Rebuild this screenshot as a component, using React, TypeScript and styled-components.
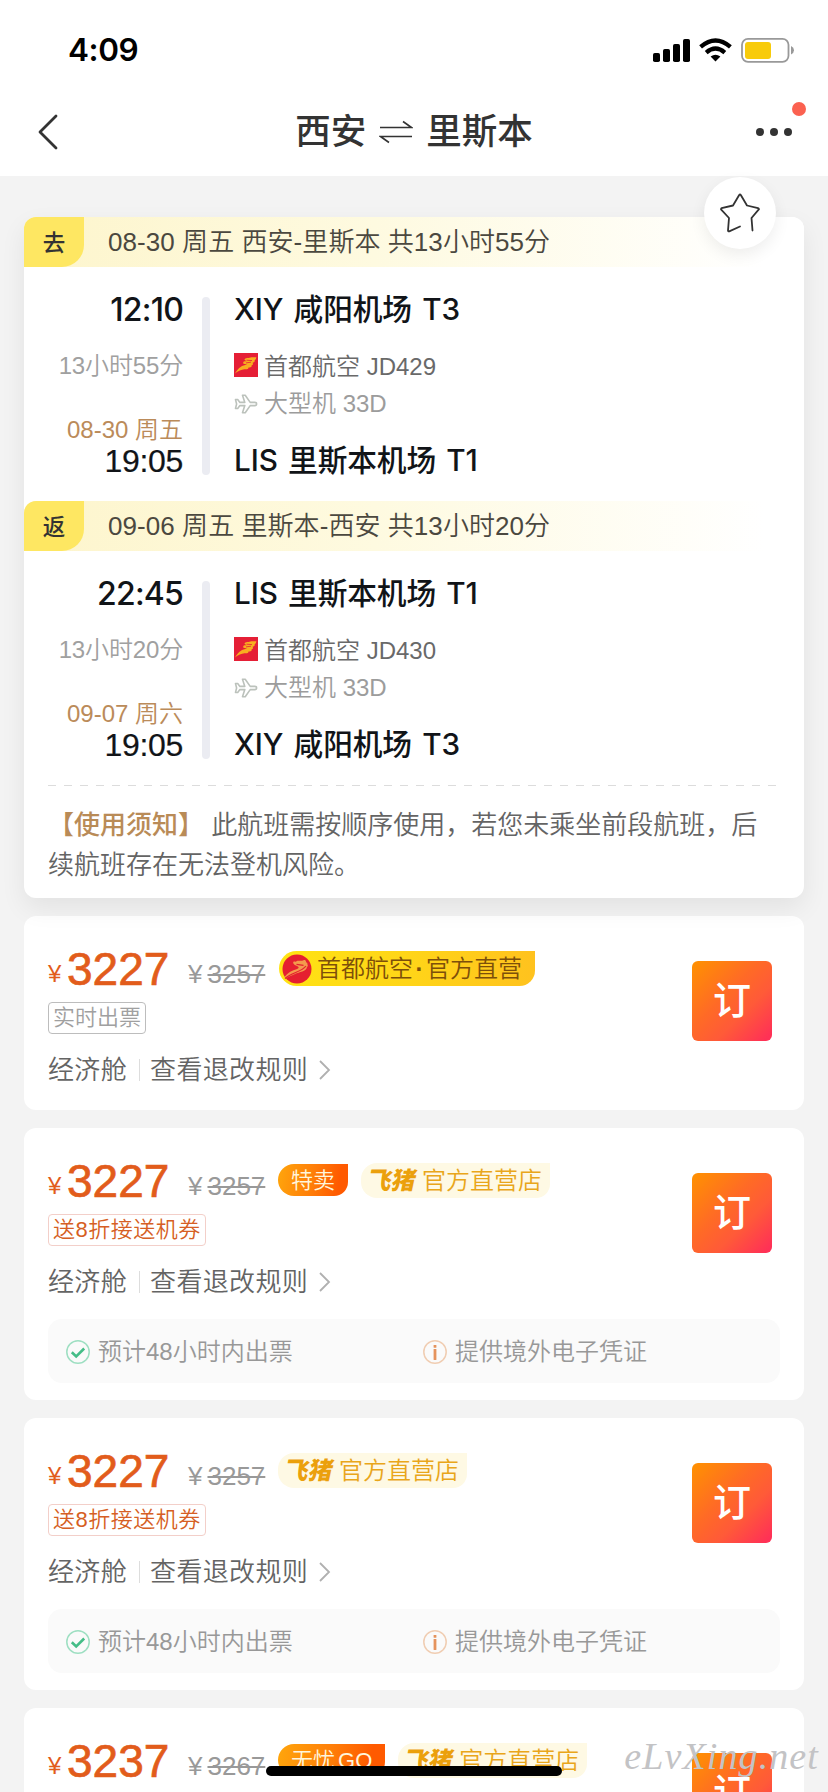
import React from "react";
import styled, { createGlobalStyle, css } from "styled-components";

const helv = `"Liberation Sans", "Noto Sans CJK SC", sans-serif`;
const round = `Inter, "Noto Sans CJK SC", sans-serif`;

const Global = createGlobalStyle`
  * { box-sizing: border-box; }
  body { margin: 0; background: #f3f3f3; font-family: ${helv}; font-weight: 350; }
`;

const Page = styled.main`
  position: relative;
  width: 828px;
  height: 1792px;
  overflow: hidden;
  background: #f3f3f3;
  white-space: nowrap;
`;

const StatusBar = styled.header`
  height: 88px;
  background: #fff;
  display: flex;
  align-items: center;
  justify-content: space-between;
  padding: 12px 34px 0 68px;
`;

const Clock = styled.div`
  font: 600 31.5px/40px ${round};
  color: #000;
  letter-spacing: -0.4px;
`;

const NavBar = styled.nav`
  height: 88px;
  background: #fff;
  display: grid;
  grid-template-columns: 120px 1fr 120px;
  align-items: center;
`;

const BackIcon = styled.svg`
  margin-left: 38px;
  display: block;
`;

const Title = styled.h1`
  margin: 0;
  display: flex;
  justify-content: center;
  align-items: center;
  gap: 13px;
  font: 500 35.5px/48px ${helv};
  color: #333;
`;

const More = styled.div`
  position: relative;
  display: flex;
  gap: 6px;
  margin-left: 48px;
`;

const Dot = styled.i`
  width: 8px;
  height: 8px;
  border-radius: 50%;
  background: #333;
`;

const Alert = styled.i`
  position: absolute;
  left: 36px;
  top: -26px;
  width: 14px;
  height: 14px;
  border-radius: 50%;
  background: #fb6150;
`;

const Content = styled.div`
  padding: 41px 24px 0;
  display: flex;
  flex-direction: column;
  gap: 18px;
`;

const TripCard = styled.section`
  position: relative;
  height: 681px;
  border-radius: 12px;
  background: #fff;
  box-shadow: 0 10px 26px rgba(0, 0, 0, 0.07);
`;

const Favorite = styled.button`
  position: absolute;
  right: 28px;
  top: -40px;
  width: 72px;
  height: 72px;
  border: 0;
  padding: 0;
  border-radius: 50%;
  background: #fff;
  box-shadow: 0 6px 16px rgba(0, 0, 0, 0.07);
  display: grid;
  place-items: center;
`;

const Band = styled.div`
  height: 50px;
  border-radius: 12px 12px 0 0;
  display: flex;
  align-items: center;
  background: linear-gradient(90deg, #fdf5cc 0%, #fefae0 45%, #fff 95%);
  font-size: 26px;
  line-height: 52px;
  letter-spacing: 0.06px;
  color: #4b483f;
`;

const Direction = styled.span`
  width: 60px;
  height: 50px;
  margin-right: 24px;
  border-radius: 12px 0 22px 0;
  background: #fee762;
  color: #333;
  font-size: 22.5px;
  font-weight: 500;
  text-align: center;
  line-height: 53px;
`;

const SegmentBody = styled.div`
  height: 234px;
  padding-top: 22px;
  display: grid;
  grid-template-columns: 159px 8px 1fr;
  column-gap: 19px;
`;

const Times = styled.div`
  display: flex;
  flex-direction: column;
  text-align: right;
  font-size: 24px;
  line-height: 30px;
`;

const Depart = styled.span`
  font: 500 32px/42px ${round};
  color: #111418;
  letter-spacing: -0.8px;
`;

const Arrive = styled.span`
  font: 400 32px/40px ${helv};
  color: #111418;
  margin-top: -4px;
  letter-spacing: -0.3px;
  -webkit-text-stroke: 0.2px #111418;
`;

const Duration = styled.span`
  margin: 20px 0 34px;
  letter-spacing: -0.15px;
  color: #a0a0a0;
`;

const ArriveDate = styled.span`
  color: #bb8b5a;
`;

const Rail = styled.i`
  height: 178px;
  margin-top: 8px;
  border-radius: 4px;
  background: #ebecf2;
`;

const Places = styled.div`
  padding-left: 5px;
`;

const Airport = styled.div`
  font: 500 29.7px/40px ${round};
  color: #111418;
  word-spacing: 2.5px;
  letter-spacing: -0.1px;
`;

const Details = styled.div`
  margin: 21px 0 18px;
`;

const Detail = styled.div<{ $muted?: boolean }>`
  display: flex;
  align-items: center;
  gap: 6px;
  height: 36px;
  font-size: 24px;
  line-height: 30px;
  padding-bottom: ${(p) => (p.$muted ? 1 : 3)}px;
  color: ${(p) => (p.$muted ? "#9c9c9c" : "#696969")};
  svg { display: block; ${(p) => !p.$muted && css`margin-top: -4px;`} }
`;

const Notice = styled.p`
  margin: 0 24px;
  padding-top: 20px;
  font-size: 26px;
  line-height: 40px;
  color: #646464;
  background: repeating-linear-gradient(90deg, #dcdcdc 0 8px, transparent 8px 16px) top / 100% 1px no-repeat;
  b { color: #b98b57; font-weight: 500; }
`;

const OfferCard = styled.article<{ $h: number }>`
  height: ${(p) => p.$h}px;
  flex: none;
  border-radius: 12px;
  background: #fff;
  padding: 31px 24px 0;
`;

const OfferTop = styled.div`
  display: flex;
  justify-content: space-between;
`;

const Book = styled.button`
  width: 80px;
  height: 80px;
  margin: 14px 8px 0 0;
  padding: 0;
  border: 0;
  border-radius: 6px;
  background: linear-gradient(135deg, #ff9200 0%, #ff6a26 42%, #ff5a38 65%, #ff3156 95%);
  color: #fff;
  font: 500 38px/78px ${helv};
`;

const PriceRow = styled.div`
  display: flex;
  height: 48px;
`;

const Yen = styled.span`
  width: 19px;
  padding-top: 12px;
  font: 400 24px/30px ${helv};
  color: #e25c1b;
`;

const Price = styled.strong`
  width: 121px;
  margin-top: -2px;
  font: 400 46px/48px ${helv};
  color: #e25c1b;
  -webkit-text-stroke: 0.7px #e25c1b;
`;

const OldPrice = styled.span`
  width: 90px;
  padding-top: 12px;
  color: #999;
  font: 400 26px/30px ${helv};
  s { margin-left: 5px; }
`;

const Badges = styled.div`
  display: flex;
  gap: 13px;
  padding-top: 4px;
`;

const Promo = styled.span`
  height: 32px;
  margin-top: 1px;
  padding: 0 13px;
  border-radius: 16px 0 14px 16px;
  background: linear-gradient(100deg, #ffa60c 0%, #ff7d08 50%, #ff5a00 85%);
  color: #fff6dc;
  font-size: 22px;
  line-height: 33px;
`;

const PromoText = styled.span`
  word-spacing: -3px;
`;

const Store = styled.span`
  height: 35px;
  padding: 0 8px 0 7px;
  display: flex;
  gap: 6px;
  border-radius: 16px 0 14px 16px;
  background: #fef9e4;
  color: #e9a61a;
  font-size: 24px;
  line-height: 36px;
`;

const Feizhu = styled.b`
  font: 900 24px/35px ${helv};
  color: #eba00c;
  transform: skewX(-12deg);
`;

const AirlineStore = styled.span`
  height: 35px;
  width: 256px;
  margin-left: 1px;
  padding-left: 3px;
  display: flex;
  align-items: center;
  gap: 5px;
  border-radius: 18px 0 16px 18px;
  background: linear-gradient(90deg, #ffe313 0%, #ffd518 50%, #ffc21e 100%);
  color: #7d4f0a;
  font-size: 24px;
  line-height: 36px;
  em { font-style: normal; font-weight: 700; display: inline-block; width: 13px; text-align: center; }
`;

const Tag = styled.span<{ $gray?: boolean }>`
  display: inline-block;
  height: 32px;
  margin-top: 7px;
  padding: 0 4px;
  border: 1px solid ${(p) => (p.$gray ? "#bdbdbd" : "#f3cfc9")};
  border-radius: 4px;
  color: ${(p) => (p.$gray ? "#a0a0a0" : "#d65f24")};
  font-size: 22px;
  line-height: 30px;
  letter-spacing: ${(p) => (p.$gray ? 0 : 0.5)}px;
`;

const Rules = styled.div`
  display: flex;
  align-items: center;
  height: 36px;
  margin-top: 18px;
  font-size: 26px;
  line-height: 36px;
  letter-spacing: 0.35px;
  color: #646464;
`;

const Divider = styled.i`
  width: 1px;
  height: 22px;
  margin: 0 10px 0 12px;
  background: #ddd;
`;

const Arrow = styled.svg`
  margin-left: 11px;
`;

const Assurances = styled.div`
  height: 64px;
  margin-top: 19px;
  padding: 1px 18px 0;
  border-radius: 14px;
  background: #fafafa;
  display: grid;
  grid-template-columns: 357px 1fr;
  align-items: center;
  font-size: 24px;
  line-height: 30px;
  color: #989898;
`;

const Assurance = styled.span`
  display: flex;
  align-items: center;
  gap: 8px;
`;

const HomeIndicator = styled.div`
  position: absolute;
  left: 266px;
  top: 1766px;
  width: 296px;
  height: 10px;
  border-radius: 5px;
  background: #000;
`;

const Watermark = styled.div`
  position: absolute;
  right: 9px;
  top: 1732px;
  font: italic 400 38px/48px "Liberation Serif", serif;
  letter-spacing: 1.1px;
  color: #c3c3c5;
`;

const AirlineLogo = () => (
  <svg width="24" height="24" viewBox="0 0 24 24">
    <rect width="24" height="24" fill="#e51f36" />
    <path d="M1 20.500C5 14 8 12.500 13 11.500L9.500 10.800C8.500 8.800 10 8 12.500 8.200L10.500 6.800C11 4.500 15 5.200 17.500 4.200C19.500 4.500 21 4 22.500 4.500C21.500 5.500 22.500 6.500 20.500 7.200C21.500 8.500 20 9.200 18.500 10C20 11 18.500 12 17.500 12.200C18.500 14 16 14.500 14.500 14.500C14.500 16.500 12 16.500 10.500 16.200C7.500 16.800 4 17.800 1 20.500Z" fill="#f8ae20" />
    <path d="M12.500 7.200l5.500 .4M12 9.900l5-.7" stroke="#e51f36" strokeWidth=".8" fill="none" />
  </svg>
);

const RoundLogo = () => (
  <svg width="30" height="30" viewBox="0 0 30 30">
    <circle cx="15" cy="15" r="14.5" fill="#e51f30" />
    <path d="M3 22.500C8 16.500 12 16.500 16 14.500C18 13 15 12 13 11C10 9.500 11 6.500 14 8C15 5.500 18 8 22 6C25 6 23 8.500 25.500 9C24.500 10 27 11.500 25 13C24.500 17.500 17 18 13 20C9 22 6 22.500 3 25Z" fill="#f39a4c" />
    <path d="M3 24.500C10 18 19 18.500 24 12M14.500 10.300l7 1" stroke="#e51f30" strokeWidth="1.200" fill="none" />
  </svg>
);

const PlaneIcon = () => (
  <svg width="24" height="20" viewBox="0 0 24 20" fill="none" stroke="#bcc2bc" strokeWidth="1.600" strokeLinejoin="round">
    <path d="M1.500 5.500h2.200l2.200 2.900h4.900L8.500 1.200h2.700l5 7.200h4.600c2.400 0 2.400 3.200 0 3.200h-4.600l-5 7.200H8.500l2.300-7.200H5.900l-2.200 2.900H1.500L2.600 10z" />
  </svg>
);

const StarIcon = () => (
  <svg width="40" height="40" viewBox="0 0 40 40" fill="none" stroke="#333" strokeWidth="1.800" strokeLinecap="round" strokeLinejoin="round">
    <path d="M32.500 37.500L31.500 25L39 16.200Q38.600 15.400 38 15.200L27 12.500L20.800 2Q20 1 19.200 2L13 12.500L1.600 15.200Q1 15.400 1 16.400L9 25L8 37.500Q8 38.600 9.200 38.400L20 33.500" />
  </svg>
);

const StatusIcons = () => (
  <svg width="142" height="26" viewBox="0 0 142 26">
    <g fill="#000">
      <rect x="1" y="16" width="7" height="9" rx="1.8" />
      <rect x="11" y="12" width="7" height="13" rx="1.8" />
      <rect x="21" y="7" width="7" height="18" rx="1.8" />
      <rect x="31" y="2" width="7" height="23" rx="1.8" />
      <path d="M63.500 24.500L58.600 19.600Q63.500 15.800 68.400 19.600Z" />
    </g>
    <g fill="none" stroke="#000" strokeWidth="4.300">
      <path d="M48.600 9.900Q63.500 -2.900 78.400 9.900" />
      <path d="M54.200 15.600Q63.500 7.600 72.800 15.600" />
    </g>
    <rect x="90" y="1.800" width="46.500" height="23" rx="6" fill="none" stroke="#999" strokeWidth="1.8" />
    <rect x="93" y="5" width="26" height="17" rx="3" fill="#f8cb0a" />
    <path d="M139 9q3 1.500 3 4.300t-3 4.300z" fill="#999" />
  </svg>
);

const CheckIcon = () => (
  <svg width="24" height="24" viewBox="0 0 24 24" fill="none">
    <circle cx="12" cy="12" r="11.200" stroke="#9edfc2" strokeWidth="1.500" />
    <path d="M5.800 12.200l4.400 4.300 8-8" stroke="#45bd87" strokeWidth="2.600" />
  </svg>
);

const InfoIcon = () => (
  <svg width="24" height="24" viewBox="0 0 24 24">
    <circle cx="12" cy="12" r="11.200" fill="none" stroke="#f0cdb2" strokeWidth="1.500" />
    <rect x="10.600" y="5" width="2.800" height="2.800" rx=".6" fill="#e5935c" />
    <rect x="10.600" y="9" width="2.800" height="11" rx=".6" fill="#e5935c" />
  </svg>
);

type Leg = {
  dir: string; head: string; depart: string; duration: string; date: string; arrive: string;
  from: string; flight: string; to: string;
};

const legs: Leg[] = [
  { dir: "去", head: "08-30 周五 西安-里斯本 共13小时55分", depart: "12:10", duration: "13小时55分", date: "08-30 周五", arrive: "19:05", from: "XIY 咸阳机场 T3", flight: "首都航空 JD429", to: "LIS 里斯本机场 T1" },
  { dir: "返", head: "09-06 周五 里斯本-西安 共13小时20分", depart: "22:45", duration: "13小时20分", date: "09-07 周六", arrive: "19:05", from: "LIS 里斯本机场 T1", flight: "首都航空 JD430", to: "XIY 咸阳机场 T3" },
];

type OfferData = { price: string; old: string; airline?: boolean; promo?: string; full: boolean };

const offers: OfferData[] = [
  { price: "3227", old: "3257", airline: true, full: false },
  { price: "3227", old: "3257", promo: "特卖", full: true },
  { price: "3227", old: "3257", full: true },
  { price: "3237", old: "3267", promo: "无忧 GO", full: true },
];

const Segment = ({ leg }: { leg: Leg }) => (
  <div>
    <Band><Direction>{leg.dir}</Direction>{leg.head}</Band>
    <SegmentBody>
      <Times>
        <Depart>{leg.depart}</Depart>
        <Duration>{leg.duration}</Duration>
        <ArriveDate>{leg.date}</ArriveDate>
        <Arrive>{leg.arrive}</Arrive>
      </Times>
      <Rail />
      <Places>
        <Airport>{leg.from}</Airport>
        <Details>
          <Detail><AirlineLogo />{leg.flight}</Detail>
          <Detail $muted><PlaneIcon />大型机 33D</Detail>
        </Details>
        <Airport>{leg.to}</Airport>
      </Places>
    </SegmentBody>
  </div>
);

const Offer = ({ o }: { o: OfferData }) => (
  <OfferCard $h={o.full ? 272 : 194}>
    <OfferTop>
      <div>
        <PriceRow>
          <Yen>¥</Yen>
          <Price>{o.price}</Price>
          <OldPrice>¥<s>{o.old}</s></OldPrice>
          <Badges>
            {o.airline && <AirlineStore><RoundLogo /><span>首都航空<em>·</em>官方直营</span></AirlineStore>}
            {o.promo && <Promo><PromoText>{o.promo}</PromoText></Promo>}
            {!o.airline && <Store><Feizhu>飞猪</Feizhu>官方直营店</Store>}
          </Badges>
        </PriceRow>
        <Tag $gray={o.airline}>{o.airline ? "实时出票" : "送8折接送机券"}</Tag>
        <Rules>
          经济舱<Divider />查看退改规则
          <Arrow width="12" height="20" viewBox="0 0 12 20" fill="none" stroke="#b0b0b0" strokeWidth="1.800">
            <path d="M1 1l9 9-9 9" />
          </Arrow>
        </Rules>
      </div>
      <Book>订</Book>
    </OfferTop>
    {o.full && (
      <Assurances>
        <Assurance><CheckIcon />预计48小时内出票</Assurance>
        <Assurance><InfoIcon />提供境外电子凭证</Assurance>
      </Assurances>
    )}
  </OfferCard>
);

export default function App() {
  return (
    <Page>
      <Global />
      <StatusBar><Clock>4:09</Clock><StatusIcons /></StatusBar>
      <NavBar>
        <BackIcon width="20" height="36" viewBox="0 0 20 36" fill="none" stroke="#333" strokeWidth="2.800" strokeLinecap="round" strokeLinejoin="round">
          <path d="M18 2L2 18l16 16" />
        </BackIcon>
        <Title>
          西安
          <svg width="34" height="24" viewBox="0 0 34 24" fill="none" stroke="#333" strokeWidth="1.600">
            <path d="M1 7.500h31.500L24 1.500M33 16.500H1.500L10 22.500" />
          </svg>
          里斯本
        </Title>
        <More><Dot /><Dot /><Dot /><Alert /></More>
      </NavBar>
      <Content>
        <TripCard>
          {legs.map((l) => <Segment key={l.dir} leg={l} />)}
          <Notice><b>【使用须知】</b> 此航班需按顺序使用，若您未乘坐前段航班，后<br />续航班存在无法登机风险。</Notice>
          <Favorite><StarIcon /></Favorite>
        </TripCard>
        {offers.map((o, i) => <Offer key={i} o={o} />)}
      </Content>
      <HomeIndicator />
      <Watermark>eLvXing.net</Watermark>
    </Page>
  );
}
